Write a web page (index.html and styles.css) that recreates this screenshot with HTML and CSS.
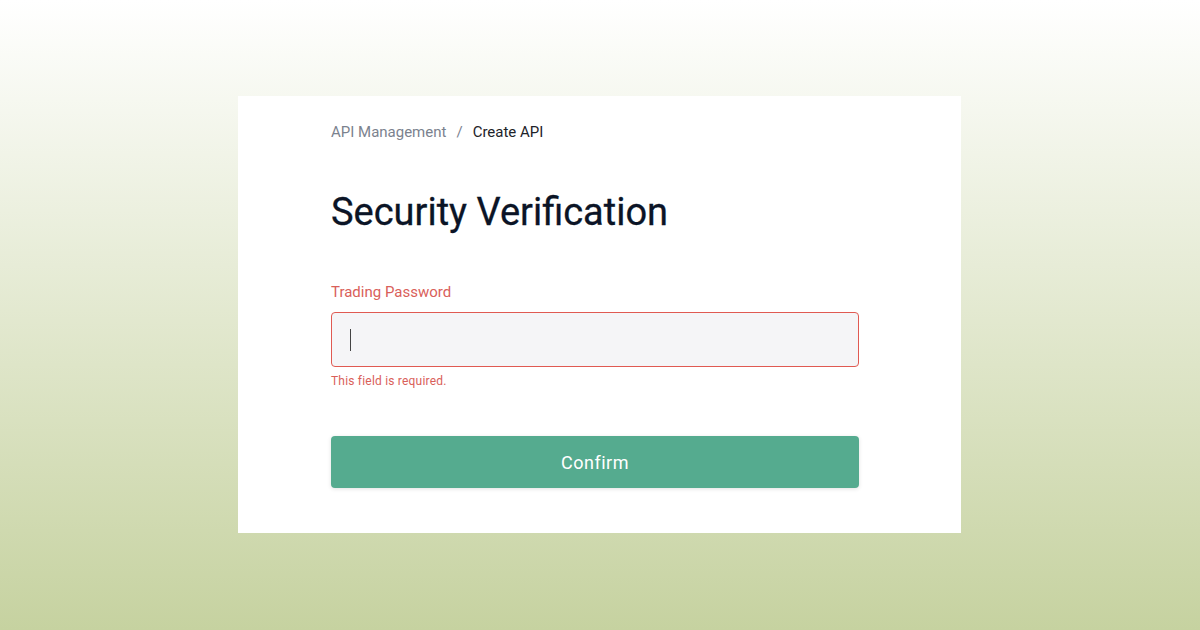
FILE: index.html
```html
<!DOCTYPE html>
<html lang="en">
<head>
    <meta charset="UTF-8">
    <meta name="viewport" content="width=device-width, initial-scale=1.0">
    <title>Security Verification</title>
    <link rel="stylesheet" href="styles.css">
</head>
<body>
    <div class="card">
        <div class="breadcrumb">
            <span class="crumb">API Management</span>
            <span class="sep">/</span>
            <span class="crumb current">Create API</span>
        </div>

        <h1>Security Verification</h1>

        <label class="field-label" for="tradingPassword">Trading Password</label>
        <div class="input-box">
            <span class="caret"></span>
            <input type="password" id="tradingPassword">
        </div>
        <p class="error">This field is required.</p>

        <button class="confirm">Confirm</button>
    </div>
</body>
</html>
```

FILE: styles.css
```css
body {
    font-family: Roboto, "Noto Sans", sans-serif;
    background: linear-gradient(to bottom, #ffffff 0%, #c6d2a0 100%);
    height: 630px;
    margin: 0;
    padding-top: 96px;
    box-sizing: border-box;
}
.card {
    width: 723px;
    height: 437px;
    margin-left: 238px;
    background: #fff;
    padding: 25px 102px 0 93px;
    box-sizing: border-box;
}
.breadcrumb {
    display: flex;
    gap: 10px;
    font-size: 15px;
    color: #7b828e;
    line-height: 22px;
}
.breadcrumb .current {
    color: #1e2329;
}
h1 {
    font-size: 38px;
    font-weight: 400;
    color: #0b1426;
    -webkit-text-stroke: 0.3px #0b1426;
    margin: 45px 0 0;
    line-height: 48px;
}
.field-label {
    display: block;
    margin-top: 45px;
    font-size: 15px;
    line-height: 22px;
    color: #d9605a;
}
.input-box {
    position: relative;
    margin-top: 9px;
    height: 55px;
    border: 1px solid #e05a52;
    border-radius: 4px;
    background: #f5f5f7;
    box-sizing: border-box;
}
.input-box input {
    width: 100%;
    height: 100%;
    border: none;
    background: transparent;
    outline: none;
    padding: 0 16px;
    box-sizing: border-box;
}
.caret {
    position: absolute;
    left: 18px;
    top: 16px;
    width: 1px;
    height: 22px;
    background: #444;
}
.error {
    margin: 6px 0 0;
    font-size: 12px;
    line-height: 16px;
    color: #d9605a;
    letter-spacing: 0.2px;
}
.confirm {
    display: block;
    width: 100%;
    height: 52px;
    margin-top: 47px;
    border: none;
    border-radius: 4px;
    background-color: #55ab8f;
    color: #fff;
    font-family: inherit;
    font-size: 18px;
    letter-spacing: 0.5px;
    box-shadow: 0 1px 4px rgba(0, 0, 0, 0.12);
}
```
